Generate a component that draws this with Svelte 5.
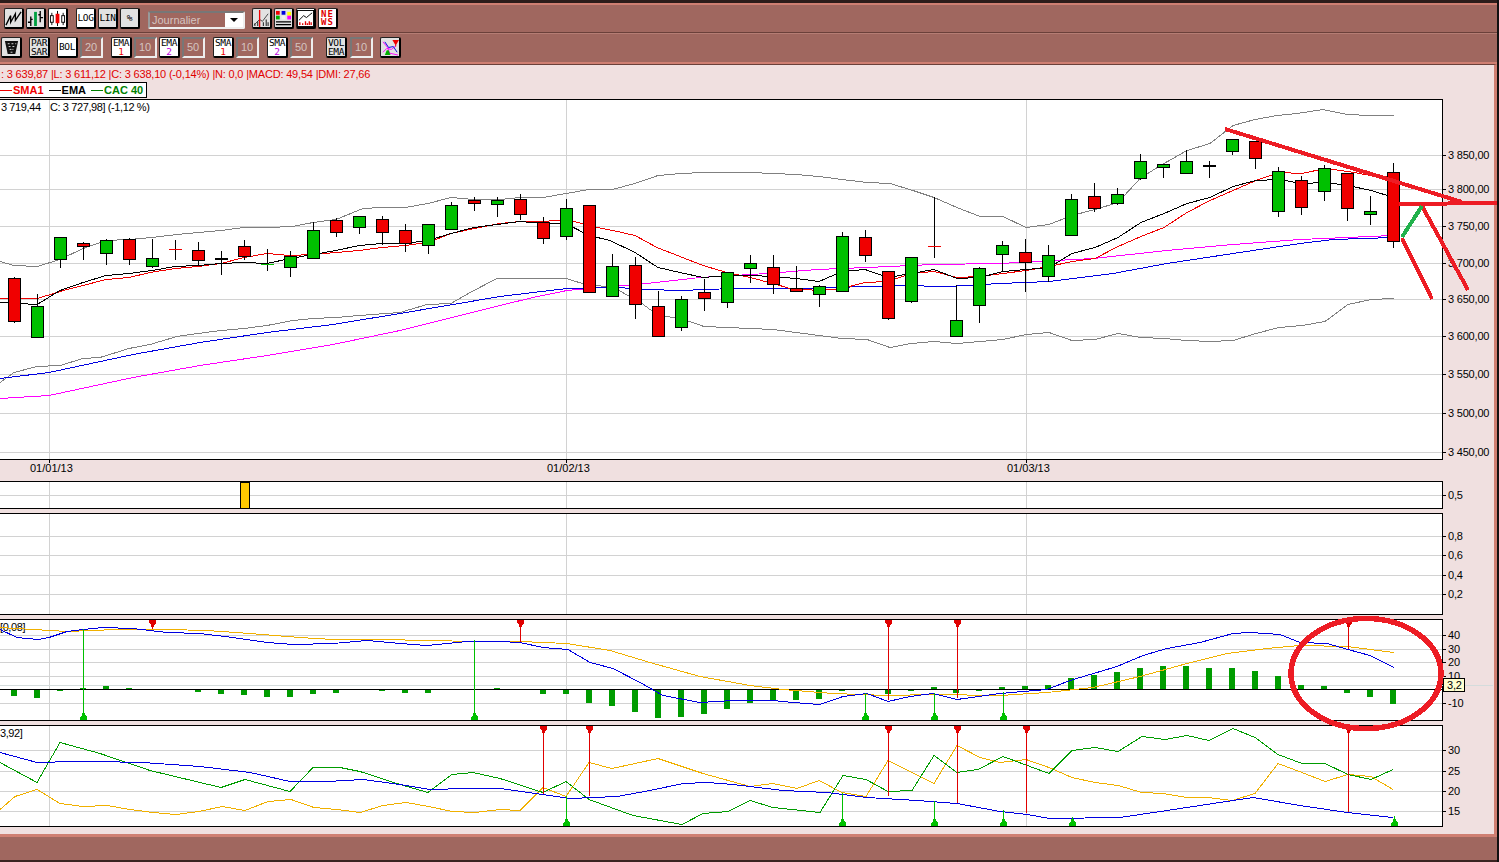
<script>
  const xAt = (i) => Math.round(14.3 + 22.98 * i);
  const gridX = [49.5, 566.5, 1026.5];

  // kind, body top, body bottom, wick top, wick bottom
  const candles = [
    ["r",278,321,277,323],["g",306,337,294,337],["g",237,259,237,268],["r",243,246,242,260],
    ["g",240,253,239,265],["r",239,259,238,265],["g",258,266,239,268],["d",249,249,240,260],
    ["r",250,260,242,266],["k",258,258,251,275],["r",246,256,240,260],["n",264,264,249,271],
    ["g",256,267,251,277],["g",230,258,222,258],["r",220,232,218,237],["g",216,227,216,234],
    ["r",219,232,216,245],["r",230,243,224,252],["g",224,245,224,254],["g",205,229,202,229],
    ["r",200,203,197,211],["g",200,204,197,217],["r",199,214,194,220],["r",222,238,217,244],
    ["g",208,236,199,240],["r",205,292,205,292],["g",266,296,254,296],["r",265,304,257,319],
    ["r",306,336,291,336],["g",299,327,296,331],["r",292,298,279,311],["g",272,302,272,308],
    ["g",263,268,255,283],["r",267,284,255,294],["r",288,291,266,292],["g",286,294,285,307],
    ["g",236,291,232,291],["r",237,255,230,262],["r",271,318,271,320],["g",257,301,257,303],
    ["d",246,246,197,258],["g",320,336,285,336],["g",268,305,267,323],["g",245,254,241,272],
    ["r",252,262,239,292],["g",255,276,245,282],["g",199,235,194,235],["r",196,208,183,212],
    ["g",194,203,188,205],["g",161,178,154,180],["g",164,167,164,178],["g",161,173,150,173],
    ["k",165,165,161,178],["g",139,151,139,155],["r",141,158,141,169],["g",171,211,167,217],
    ["r",180,207,176,215],["g",168,191,165,201],["r",173,208,173,221],["g",211,214,196,225],
    ["r",172,241,163,248],
  ];

  const upper = [0,261,14,265,37,266,60,259,83,248,106,240,129,239,152,237,177,234,198,232,221,230,244,227,267,227,293,226,313,222,336,219,363,208,382,207,405,207,428,203,451,197,474,199,500,199,520,197,543,197,566,193,589,189,612,189,635,183,658,175,681,173,704,172,750,172,773,173,796,174,819,176,842,179,867,182,890,183,913,190,934,197,957,207,980,216,1003,216,1026,227,1049,224,1072,215,1095,209,1118,202,1141,177,1164,163,1187,150,1210,143,1233,125,1255,119,1277,115,1297,113,1323,109,1347,114,1371,115,1394,115];
  const lower = [0,382,14,372,37,366,60,365,83,358,100,357,129,348,150,344,177,336,198,333,221,330,244,328,267,325,293,320,313,318,336,317,359,315,400,312,427,304,451,303,470,292,497,278,566,278,589,285,612,286,642,303,658,315,681,318,704,326,750,328,773,329,796,332,819,335,842,338,867,339,890,347,911,343,934,341,957,343,980,341,1003,339,1026,334,1049,332,1072,340,1095,339,1118,333,1141,337,1164,338,1187,340,1210,341,1233,340,1256,333,1279,327,1302,325,1325,321,1348,304,1371,299,1394,298];
  const sma1 = [0,298,37,298,67,289,83,285,106,279,129,277,150,272,175,268,198,266,221,263,244,257,267,253,290,255,313,254,336,252,359,250,382,247,405,245,428,242,451,233,474,228,500,223,520,221,543,221,566,219,597,227,613,230,635,235,657,247,680,256,703,265,727,272,750,277,773,283,790,288,819,290,842,288,865,282,888,281,911,273,934,271,957,277,980,276,1003,273,1026,270,1049,266,1072,261,1095,258,1118,246,1141,236,1164,227,1187,212,1210,200,1233,190,1256,180,1279,172,1302,173,1325,168,1348,171,1371,175,1394,177];
  const ema = [0,302,37,304,60,290,83,282,106,275,129,273,152,270,175,266,198,265,221,263,244,262,267,263,290,258,313,254,336,250,359,245,382,243,405,243,428,240,451,233,474,227,497,224,520,221,543,223,566,223,589,235,610,240,635,252,658,267,680,272,703,277,727,275,750,275,773,276,796,278,819,281,842,271,865,269,888,277,911,273,934,269,957,278,980,277,1003,271,1026,269,1049,267,1072,253,1095,247,1118,237,1141,222,1164,213,1187,203,1210,197,1233,186,1256,180,1279,179,1302,183,1325,182,1348,185,1371,190,1394,197];
  const blue = [0,378,49,372,133,354,200,342,267,332,333,324,400,313,500,296,533,292,567,288,617,287,647,289,680,290,733,288,800,288,867,286,900,285,947,286,1000,283,1049,281,1113,273,1167,263,1233,253,1300,243,1333,239,1393,237];
  const magenta = [0,398,49,395,133,377,200,365,267,355,333,344,400,330,500,305,533,297,567,290,600,287,647,283,700,277,767,273,817,269,867,267,933,264,1000,263,1093,258,1167,250,1233,244,1300,239,1393,235];

  const macdBlue = [0,629,17,637,38,639,49,637,67,631,83,629,103,627,133,628,167,632,200,633,233,637,267,642,293,644,333,643,367,640,400,643,427,645,467,641,500,641,520,642,543,647,568,649,590,662,613,668,640,682,663,695,700,702,733,700,773,700,793,702,820,704,843,696,867,693,888,701,910,696,933,693,957,699,1000,693,1047,689,1070,680,1117,666,1143,655,1167,648,1200,642,1233,633,1250,632,1280,634,1300,642,1327,643,1348,649,1370,655,1394,667];
  const macdOrange = [0,627,33,629,67,631,117,629,167,629,207,630,250,633,300,637,333,639,393,639,417,640,487,641,520,641,567,643,610,650,650,662,700,676,750,685,783,689,833,693,887,695,933,694,1000,695,1047,692,1093,687,1140,676,1187,663,1227,653,1267,648,1300,645,1347,646,1394,652];
  const hist = [696,698,691,688,686,688,0,0,692,694,695,697,697,694,693,0,691,693,693,0,0,688,0,694,694,703,706,712,718,717,714,709,703,700,700,699,691,0,694,691,687,693,691,687,686,685,678,675,672,668,666,666,668,668,671,676,685,686,693,697,704];

  const dmiBlue = [0,752,37,762,73,761,97,761,143,762,200,766,250,772,290,781,327,781,363,779,400,784,430,789,467,788,500,788,543,794,570,798,617,796,650,790,683,783,707,782,733,784,783,790,827,792,867,797,917,800,957,803,1000,811,1027,814,1050,818,1120,817,1167,810,1233,800,1253,797,1300,805,1347,812,1393,817];
  const dmiGreen = [0,762,37,782,60,742,100,753,150,770,221,787,245,779,290,791,313,767,340,767,360,771,400,784,428,792,452,774,473,772,500,778,543,792,566,781,589,799,633,815,682,824,703,813,728,811,750,800,773,807,820,812,843,775,866,779,888,791,912,790,934,755,957,772,978,769,1003,756,1049,773,1072,750,1095,747,1118,751,1142,736,1165,739,1187,735,1209,740,1233,728,1255,737,1278,754,1302,763,1325,763,1348,774,1371,779,1393,769];
  const dmiOrange = [0,809,15,796,37,789,60,803,83,806,107,805,130,809,153,812,176,814,199,811,222,806,245,810,268,801,291,799,314,807,337,809,360,812,383,805,406,802,429,806,452,811,475,812,500,809,520,810,543,787,566,796,589,762,612,768,658,758,703,773,750,786,773,783,797,788,819,780,842,792,866,796,888,760,934,783,957,745,980,757,1000,762,1026,759,1049,767,1072,777,1095,782,1118,785,1142,792,1163,793,1187,797,1208,797,1232,800,1255,793,1278,763,1302,772,1325,781,1348,774,1371,776,1393,789];

  const pts = (a) => {
    let s = "";
    for (let i = 0; i < a.length; i += 2) s += a[i] + "," + (a[i + 1] + 0.5) + " ";
    return s;
  };

  const priceAxis = [[155,"3 850,00"],[189,"3 800,00"],[226,"3 750,00"],[263,"3 700,00"],[299,"3 650,00"],[336,"3 600,00"],[374,"3 550,00"],[413,"3 500,00"],[452,"3 450,00"]];
  const volAxis = [[536,"0,8"],[555,"0,6"],[575,"0,4"],[594,"0,2"]];
  const macdAxis = [[635,"40"],[649,"30"],[662,"20"],[676,"10"],[703,"-10"]];
  const dmiAxis = [[750,"30"],[771,"25"],[791,"20"],[811,"15"]];

  const macdDown = [[152,629],[520,642],[888,700],[957,698],[1348,649]];
  const macdUp = [[83,629],[474,640],[865,693],[934,693],[1003,692]];
  const dmiDown = [[543,794],[589,796],[888,796],[957,803],[1026,813],[1348,812]];
  const dmiUp = [[566,796],[842,793],[934,801],[1003,810],[1072,817],[1394,816]];
</script>

{#snippet axis(list)}
  {#each list as [y, label]}
    <line class="tickline" x1="1442" x2="1446" y1={y + 0.5} y2={y + 0.5} />
    <text class="tick" x="1448" y={y + 4}>{label}</text>
  {/each}
{/snippet}

{#snippet grid(list, top, bottom)}
  {#each list as [y]}
    <line class="gridline" x1="0" x2="1442" y1={y + 0.5} y2={y + 0.5} />
  {/each}
  {#each gridX as x}
    <line class="gridline" x1={x} x2={x} y1={top} y2={bottom} />
  {/each}
{/snippet}

{#snippet signals(down, up, top, bottom)}
  {#each down as [x, y]}
    <line class="sig-red" x1={x + 0.5} x2={x + 0.5} y1={top} y2={y} />
    <polygon class="fill-red" points="{x - 3},{top} {x + 4},{top} {x + 4},{top + 3} {x + 2},{top + 5} {x + 1.5},{top + 7} {x - 0.5},{top + 7} {x - 1},{top + 5} {x - 3},{top + 3}" />
  {/each}
  {#each up as [x, y]}
    <line class="sig-green" x1={x + 0.5} x2={x + 0.5} y1={bottom} y2={y} />
    <polygon class="fill-green" points="{x - 3},{bottom} {x + 4},{bottom} {x + 4},{bottom - 3} {x + 2},{bottom - 5} {x + 1.5},{bottom - 7} {x - 0.5},{bottom - 7} {x - 1},{bottom - 5} {x - 3},{bottom - 3}" />
  {/each}
{/snippet}

<div class="root">
  <div class="toolbars">
    <div class="row row1">
      <div class="group">
        <button class="btn">
          <svg viewBox="0 0 18 18"><path d="M1 16 L6 6 L6 13 L11 4 L11 11 L17 2" fill="none" stroke="#000" stroke-width="1.4" /></svg>
        </button>
        <button class="btn">
          <svg viewBox="0 0 18 18">
            <path d="M4 7V17M1 13H4M4 10H6M14 1V13M12 5H14M14 8H17" fill="none" stroke="#000" stroke-width="1.4" />
            <path d="M9 2V17" stroke="#00a040" stroke-width="3" />
          </svg>
        </button>
        <button class="btn white">
          <svg viewBox="0 0 18 18">
            <path d="M3 3V16M15 3V16" stroke="#000" /><rect x="1.5" y="6" width="3" height="7" fill="#fff" stroke="#000" /><rect x="13.5" y="6" width="3" height="7" fill="#fff" stroke="#000" />
            <path d="M9 1V17" stroke="#000" /><rect x="7" y="4" width="4" height="10" fill="#f00000" />
          </svg>
        </button>
      </div>
      <div class="group">
        <button class="btn white label">LOG</button>
        <button class="btn label">LIN</button>
        <button class="btn label">%</button>
      </div>
      <div class="select">
        <span class="select-text">Journalier</span>
        <span class="select-arrow"></span>
      </div>
      <div class="group">
        <button class="btn">
          <svg viewBox="0 0 18 18">
            <path d="M1 16 L7 10 L10 12 L16 4" fill="none" stroke="#444" /><path d="M2 17V14M5 17V12M11 17V13M14 17V10M16 17V13" stroke="#333" stroke-width="1.2" />
            <path d="M7 0V18" stroke="#f00000" stroke-width="1.4" />
          </svg>
        </button>
        <button class="btn">
          <svg viewBox="0 0 18 18">
            <rect x="1" y="1" width="4" height="4" fill="#f00000" /><rect x="7" y="1" width="4" height="4" fill="#0000e0" /><rect x="13" y="2" width="4" height="4" fill="#ffff00" />
            <rect x="1" y="6" width="4" height="4" fill="#00b000" /><rect x="7" y="6" width="4" height="4" fill="#f0f0f0" /><rect x="13" y="6" width="4" height="4" fill="#ff00ff" />
            <path d="M1 12.5H17M1 15.5H17" stroke="#000" stroke-width="1.4" />
          </svg>
        </button>
        <button class="btn white">
          <svg viewBox="0 0 18 18">
            <rect x="0.5" y="0.5" width="17" height="17" fill="#fff" stroke="#000" />
            <path d="M2 11 L7 6 L10 8 L16 3" fill="none" stroke="#000" />
            <path d="M3 16V13M6 16V14M9 16V12M11 16V14M13 16V12M15 16V13" stroke="#e00000" stroke-width="1.4" />
          </svg>
        </button>
        <button class="btn white news"><span>NE</span><span>WS</span></button>
      </div>
    </div>
    <div class="row row2">
      <button class="btn">
        <svg viewBox="0 0 18 18">
          <path d="M2 2H16L13 16H5Z" fill="#111" />
          <path d="M5 5H7M9 5H11M13 5H14M6 8H8M10 8H12M7 11H9M10 11H11M8 14H10" stroke="#ddd" />
        </svg>
      </button>
      <button class="btn label two tight">PAR<br />SAR</button>
      <div class="pair tight">
        <button class="btn white label">BOL</button>
        <span class="num">20</span>
      </div>
      <div class="pair">
        <button class="btn white label two">EMA<br /><b class="red">1</b></button>
        <span class="num">10</span>
        <button class="btn white label two">EMA<br /><b class="mag">2</b></button>
        <span class="num">50</span>
      </div>
      <div class="pair">
        <button class="btn white label two">SMA<br /><b class="red">1</b></button>
        <span class="num">10</span>
      </div>
      <div class="pair">
        <button class="btn white label two">SMA<br /><b class="mag">2</b></button>
        <span class="num">50</span>
      </div>
      <div class="pair vol">
        <button class="btn label two">VOL<br />EMA</button>
        <span class="num">10</span>
      </div>
      <button class="btn">
        <svg viewBox="0 0 18 18">
          <path d="M1 3 L6 9 L8 15 L17 17" fill="none" stroke="#ff00ff" />
          <path d="M1 14 L5 10 L10 11 L15 7" fill="none" stroke="#ff00ff" />
          <path d="M3 3 L7 9 L12 8 L16 14" fill="none" stroke="#0000e0" />
          <path d="M11 1H18L15 6V8H14V6Z" fill="#f00000" />
          <path d="M3 17H9L7 12H5Z" fill="#00b000" />
        </svg>
      </button>
    </div>
  </div>

  <div class="body">
    <div class="status">: 3 639,87 |L: 3 611,12 |C: 3 638,10 (-0,14%) |N: 0,0 |MACD: 49,54 |DMI: 27,66</div>
    <div class="legend">
      <span class="key"><i class="dash k-red"></i><span class="k-red-t">SMA1</span></span>
      <span class="key"><i class="dash k-black"></i><span>EMA</span></span>
      <span class="key"><i class="dash k-green"></i><span class="k-green-t">CAC 40</span></span>
    </div>

    <svg class="chart" width="1494" height="382" viewBox="0 99 1494 382">
      <rect class="plot" x="-2" y="99.5" width="1444.5" height="360" />
      {@render grid(priceAxis, 100, 459)}
      <text class="note" x="1" y="111">3 719,44</text>
      <text class="note" x="50" y="111">C: 3 727,98] (-1,12 %)</text>
      <polyline class="l-gray" points={pts(upper)} />
      <polyline class="l-gray" points={pts(lower)} />
      <polyline class="l-mag" points={pts(magenta)} />
      <polyline class="l-blue" points={pts(blue)} />
      <polyline class="l-red" points={pts(sma1)} />
      <polyline class="l-black" points={pts(ema)} />
      {#each candles as [kind, top, bottom, wt, wb], i}
        {@const x = xAt(i)}
        <line class="wick" x1={x + 0.5} x2={x + 0.5} y1={wt} y2={wb} />
        {#if kind === "r" || kind === "g"}
          <rect class={kind === "r" ? "c-red" : "c-green"} x={x - 6 + 0.5} y={top + 0.5} width="12" height={bottom - top} />
        {:else}
          <line class="doji doji-{kind}" x1={x - 6} x2={x + 7} y1={top + 0.5} y2={top + 0.5} />
        {/if}
      {/each}
      {@render axis(priceAxis)}
      {#each gridX as x}
        <line class="tickline" x1={x} x2={x} y1="459" y2="463" />
      {/each}
      <text class="tick date" x="30" y="472">01/01/13</text>
      <text class="tick date" x="547" y="472">01/02/13</text>
      <text class="tick date" x="1007" y="472">01/03/13</text>
    </svg>

    <svg class="chart" width="1494" height="28" viewBox="0 481 1494 28">
      <rect class="plot" x="-2" y="481.5" width="1444.5" height="27" />
      {@render grid([[495, ""]], 482, 508)}
      <rect class="bar" x="240" y="482.5" width="9" height="26" />
      {@render axis([[495, "0,5"]])}
    </svg>

    <svg class="chart gap" width="1494" height="102" viewBox="0 513 1494 102">
      <rect class="plot" x="-2" y="513.5" width="1444.5" height="101" />
      {@render grid(volAxis, 514, 614)}
      {@render axis(volAxis)}
    </svg>

    <svg class="chart gap" width="1494" height="102" viewBox="0 619 1494 102">
      <rect class="plot" x="-2" y="619.5" width="1444.5" height="101" />
      {@render grid(macdAxis, 620, 720)}
      <line class="hair" x1="0" x2="1493" y1="685.5" y2="685.5" />
      <text class="note" x="0" y="631">[0,08]</text>
      {#each hist as v, i}
        {#if v}
          <rect class="hist" x={xAt(i) - 3} y={Math.min(v, 689)} width="6" height={Math.abs(v - 689)} />
        {/if}
      {/each}
      <line class="zero" x1="0" x2="1442" y1="689.5" y2="689.5" />
      <polyline class="l-orange" points={pts(macdOrange)} />
      <polyline class="l-blue" points={pts(macdBlue)} />
      {@render signals(macdDown, macdUp, 620, 720)}
      {@render axis(macdAxis)}
      <rect class="tip" x="1443.5" y="678.5" width="21" height="13" />
      <text class="tick" x="1447" y="689">3,2</text>
    </svg>

    <svg class="chart gap" width="1494" height="102" viewBox="0 725 1494 102">
      <rect class="plot" x="-2" y="725.5" width="1444.5" height="101" />
      {@render grid(dmiAxis, 726, 826)}
      <text class="note" x="0" y="737">3,92]</text>
      <polyline class="l-orange" points={pts(dmiOrange)} />
      <polyline class="l-dgreen" points={pts(dmiGreen)} />
      <polyline class="l-blue" points={pts(dmiBlue)} />
      {@render signals(dmiDown, dmiUp, 726, 826)}
      {@render axis(dmiAxis)}
    </svg>
  </div>

  <div class="footer"></div>

  <!-- hand drawn marks on top of the whole chart -->
  <svg class="marks" width="1499" height="862" viewBox="0 0 1499 862">
    <path class="mark" d="M1225 129 L1462 202" />
    <path class="mark" d="M1399 204 L1498 203" />
    <path class="mark" d="M1422 206 L1468 290" />
    <path class="mark" d="M1402 238 L1432 299" />
    <path class="mark-green" d="M1402 237 L1422 206" />
    <ellipse class="mark ring" cx="1366" cy="673.5" rx="75" ry="55" />
  </svg>
</div>

<style>
  :global(body) {
    margin: 0;
    overflow: hidden;
    background: #a0675f;
  }
  .root {
    position: relative;
    width: 1497px;
    height: 862px;
    display: flex;
    flex-direction: column;
    overflow: hidden;
    background: #a0675f;
    border-right: 2px solid #111;
    font-family: "Liberation Sans", Arial, sans-serif;
  }
  .toolbars {
    border-top: 3px solid #2c1c1a;
    height: 64px;
    box-sizing: border-box;
    flex: none;
  }
  .row {
    display: flex;
    align-items: flex-start;
    box-sizing: border-box;
  }
  .row1 {
    height: 30px;
    padding: 3px 0 0 4px;
    gap: 8px;
    border-top: 2px solid #cf7f72;
    border-bottom: 1px solid #6b403a;
  }
  .row1 .btn {
    width: 20px;
  }
  .row2 {
    height: 31px;
    padding: 3px 0 0 1px;
    gap: 8px;
    border-top: 1px solid #b57d74;
    border-bottom: 2px solid #cf7f72;
  }
  .tight {
    margin-left: -1px;
  }
  .group {
    display: flex;
    gap: 2px;
  }
  .pair {
    display: flex;
    gap: 2px;
  }
  .vol {
    margin-left: 5px;
    margin-right: -1px;
    gap: 3px;
  }
  .btn {
    width: 21px;
    height: 21px;
    box-sizing: border-box;
    padding: 0;
    display: flex;
    flex-direction: column;
    align-items: center;
    justify-content: center;
    background: #e2e2e2;
    border: 1px solid #222;
    border-right: 2px solid #000;
    border-bottom: 2px solid #000;
    border-radius: 2px;
    color: #000;
  }
  .btn svg {
    width: 17px;
    height: 17px;
    display: block;
  }
  .white {
    background: #fff;
  }
  .label {
    display: block;
    font: 9.5px/10px "DejaVu Sans Mono", monospace;
    letter-spacing: -0.4px;
    text-align: center;
  }
  .two {
    line-height: 9px;
  }
  .label b {
    font-weight: 400;
  }
  .red {
    color: #f00000;
  }
  .mag {
    color: #c000e0;
  }
  .news {
    font: 700 9px/8px "DejaVu Sans Mono", monospace;
    color: #e00000;
    letter-spacing: 1px;
  }
  .select {
    width: 97px;
    height: 18px;
    margin: 3px -1px 0 0;
    box-sizing: border-box;
    display: flex;
    border: 2px solid #eee;
    border-top-color: #777;
    border-left-color: #999;
    border-radius: 2px;
  }
  .select-text {
    flex: 1;
    padding-left: 2px;
    font-size: 11px;
    line-height: 14px;
    color: #d4c4c0;
  }
  .select-arrow {
    width: 18px;
    background: #fff;
    position: relative;
  }
  .select-arrow::after {
    content: "";
    position: absolute;
    left: 5px;
    top: 5px;
    border: 4px solid transparent;
    border-top: 4px solid #000;
    border-bottom: 0;
  }
  .num {
    width: 23px;
    height: 21px;
    box-sizing: border-box;
    padding-left: 3px;
    border: 2px solid #eee;
    border-top-color: #777;
    border-left-color: #777;
    font: 11px/17px "Liberation Sans", sans-serif;
    color: #d4c4c0;
  }
  .body {
    flex: none;
    height: 770px;
    box-sizing: border-box;
    width: 1497px;
    background: #f0e0e0;
    border-top: 1px solid #6b403a;
    border-right: 3px solid #cf7f72;
    display: flex;
    flex-direction: column;
  }
  .status {
    height: 17px;
    padding-left: 1px;
    font-size: 11px;
    line-height: 18px;
    letter-spacing: -0.19px;
    white-space: nowrap;
    color: #e00000;
  }
  .legend {
    width: 146px;
    height: 14px;
    flex: none;
    display: flex;
    gap: 5px;
    align-items: center;
    border: 1px solid #000;
    border-left: 0;
    background: #fff;
    font-size: 11px;
    font-weight: 700;
    white-space: nowrap;
    margin-bottom: 1px;
  }
  .key {
    display: flex;
    flex: none;
    align-items: center;
    gap: 1px;
  }
  .dash {
    width: 12px;
    height: 1px;
  }
  .k-red {
    background: #f00000;
  }
  .k-black {
    background: #000;
  }
  .k-green {
    background: #008000;
  }
  .k-red-t {
    color: #f00000;
  }
  .k-green-t {
    color: #008000;
  }
  .chart {
    display: block;
    flex: none;
    shape-rendering: crispEdges;
  }
  .gap {
    margin-top: 4px;
  }
  .plot {
    fill: #fff;
    stroke: #000;
  }
  .gridline {
    stroke: #d2d2d2;
  }
  .tickline {
    stroke: #000;
  }
  .hair {
    stroke: #d4dcdc;
  }
  .zero {
    stroke: #000;
  }
  .tick {
    font-size: 11px;
    letter-spacing: -0.2px;
    fill: #000;
  }
  .date {
    letter-spacing: 0;
  }
  .note {
    font-size: 11px;
    letter-spacing: -0.4px;
    fill: #000;
  }
  polyline {
    fill: none;
    stroke-width: 1;
  }
  .l-gray {
    stroke: #808080;
  }
  .l-mag {
    stroke: #ff00ff;
  }
  .l-blue {
    stroke: #0000e0;
  }
  .l-red {
    stroke: #f00000;
  }
  .l-black {
    stroke: #000;
  }
  .l-orange {
    stroke: #f0b000;
  }
  .l-dgreen {
    stroke: #009c00;
  }
  .wick {
    stroke: #000;
  }
  .c-red {
    fill: #f00000;
    stroke: #000;
  }
  .c-green {
    fill: #00c000;
    stroke: #000;
  }
  .doji-d {
    stroke: #f00000;
  }
  .doji-n {
    stroke: #00c000;
  }
  .doji-k {
    stroke: #000;
    stroke-width: 2;
  }
  .bar {
    fill: #ffc800;
    stroke: #000;
  }
  .hist {
    fill: #009c00;
  }
  .tip {
    fill: #ffffd0;
    stroke: #000;
  }
  .sig-red {
    stroke: #e00000;
  }
  .sig-green {
    stroke: #00c000;
  }
  .fill-red {
    fill: #e00000;
  }
  .fill-green {
    fill: #00c000;
  }
  .footer {
    flex: none;
    height: 28px;
    box-sizing: border-box;
    border-top: 3px solid #cf7f72;
    border-bottom: 2px solid #3a2320;
    background: #a0675f;
  }
  .marks {
    position: absolute;
    left: 0;
    top: 0;
    pointer-events: none;
    shape-rendering: crispEdges;
  }
  .mark {
    fill: none;
    stroke: #ed1c24;
    stroke-width: 4;
  }
  .ring {
    stroke-width: 5.5;
  }
  .mark-green {
    fill: none;
    stroke: #22b14c;
    stroke-width: 4;
  }
</style>
